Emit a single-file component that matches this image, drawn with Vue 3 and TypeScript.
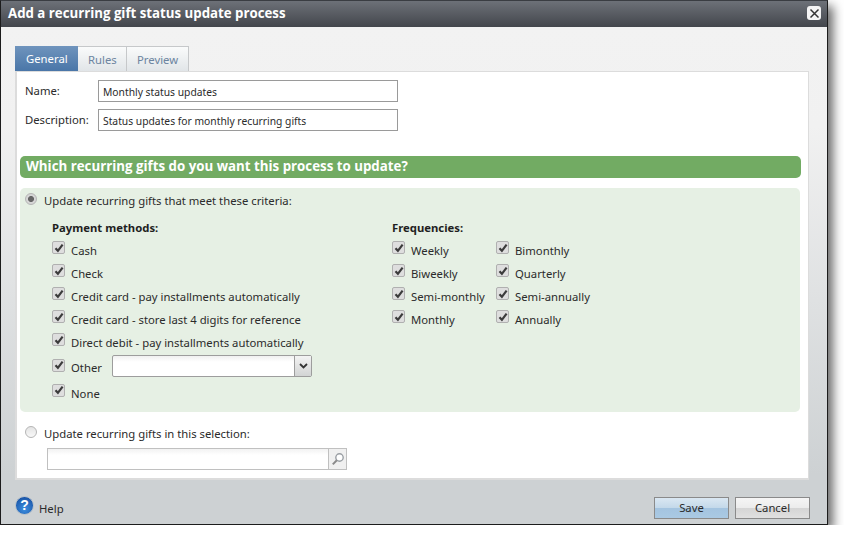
<script setup lang="ts">
const payments = [
  'Cash',
  'Check',
  'Credit card - pay installments automatically',
  'Credit card - store last 4 digits for reference',
  'Direct debit - pay installments automatically',
]
const freqA = ['Weekly', 'Biweekly', 'Semi-monthly', 'Monthly']
const freqB = ['Bimonthly', 'Quarterly', 'Semi-annually', 'Annually']
</script>

<template>
  <div class="dialog">
    <header class="titlebar">
      <span class="title">Add a recurring gift status update process</span>
      <span class="close">
        <svg width="11" height="11" viewBox="0 0 11 11"><path d="M1.5 1.5l8 8M9.5 1.5l-8 8" stroke="#333" stroke-width="1.5" fill="none" /></svg>
      </span>
    </header>
    <div class="body">
      <nav class="tabs">
        <span class="tab active">General</span>
        <span class="tab">Rules</span>
        <span class="tab">Preview</span>
      </nav>
      <main class="panel">
        <div class="field first">
          <label>Name:</label>
          <div class="input">Monthly status updates</div>
        </div>
        <div class="field second">
          <label>Description:</label>
          <div class="input">Status updates for monthly recurring gifts</div>
        </div>
        <h2 class="banner">Which recurring gifts do you want this process to update?</h2>
        <section class="criteria">
          <div class="radio-row">
            <span class="radio on"></span>
            <span>Update recurring gifts that meet these criteria:</span>
          </div>
          <div class="columns">
            <div class="pay">
              <h3>Payment methods:</h3>
              <div v-for="p in payments" :key="p" class="check-row">
                <span class="cb"><svg width="10" height="10" viewBox="0 0 10 10"><path d="M1.5 5.2l2.4 2.6L8.6 1.6" stroke="#3c3c3c" stroke-width="2.2" fill="none" /></svg></span>
                <span>{{ p }}</span>
              </div>
              <div class="check-row other">
                <span class="cb"><svg width="10" height="10" viewBox="0 0 10 10"><path d="M1.5 5.2l2.4 2.6L8.6 1.6" stroke="#3c3c3c" stroke-width="2.2" fill="none" /></svg></span>
                <span class="other-label">Other</span>
                <div class="combo">
                  <div class="combo-text"></div>
                  <span class="combo-btn"><svg width="9" height="6" viewBox="0 0 9 6"><path d="M1 1l3.5 3.5L8 1" stroke="#333" stroke-width="1.8" fill="none" /></svg></span>
                </div>
              </div>
              <div class="check-row none">
                <span class="cb"><svg width="10" height="10" viewBox="0 0 10 10"><path d="M1.5 5.2l2.4 2.6L8.6 1.6" stroke="#3c3c3c" stroke-width="2.2" fill="none" /></svg></span>
                <span>None</span>
              </div>
            </div>
            <div class="freq">
              <h3>Frequencies:</h3>
              <div class="freq-cols">
                <div class="freq-a">
                  <div v-for="f in freqA" :key="f" class="check-row">
                    <span class="cb"><svg width="10" height="10" viewBox="0 0 10 10"><path d="M1.5 5.2l2.4 2.6L8.6 1.6" stroke="#3c3c3c" stroke-width="2.2" fill="none" /></svg></span>
                    <span>{{ f }}</span>
                  </div>
                </div>
                <div>
                  <div v-for="f in freqB" :key="f" class="check-row">
                    <span class="cb"><svg width="10" height="10" viewBox="0 0 10 10"><path d="M1.5 5.2l2.4 2.6L8.6 1.6" stroke="#3c3c3c" stroke-width="2.2" fill="none" /></svg></span>
                    <span>{{ f }}</span>
                  </div>
                </div>
              </div>
            </div>
          </div>
        </section>
        <div class="radio-row second-radio">
          <span class="radio"></span>
          <span>Update recurring gifts in this selection:</span>
        </div>
        <div class="search">
          <div class="search-text"></div>
          <span class="search-btn">
            <svg width="14" height="14" viewBox="0 0 14 14"><circle cx="8.5" cy="5.5" r="3.7" stroke="#9a9fa4" stroke-width="1.4" fill="#fff" /><path d="M5.8 8.2L1.8 12.4" stroke="#8a8a8a" stroke-width="2" /></svg>
          </span>
        </div>
      </main>
      <footer class="footer">
        <span class="help-icon">?</span>
        <span class="help">Help</span>
        <span class="btn save">Save</span>
        <span class="btn cancel">Cancel</span>
      </footer>
    </div>
  </div>
</template>

<style>
html, body { background: #fff; margin: 0; }
</style>

<style scoped>
.dialog {
  box-sizing: border-box;
  width: 828px;
  height: 525px;
  border: 1px solid #1c1c1c;
  border-top-color: #3a3d42;
  box-shadow: 5px 6px 10px rgba(0, 0, 0, 0.6);
  font-family: "Noto Sans", "Open Sans", sans-serif;
  font-size: 11.3px;
  color: #2b2b2b;
  display: flex;
  flex-direction: column;
}
.titlebar {
  height: 26px;
  flex: none;
  background: linear-gradient(#6d7178, #43464c);
  display: flex;
  align-items: center;
  justify-content: space-between;
  padding: 0 6px 0 7px;
}
.title {
  color: #fff;
  font-family: "Open Sans", sans-serif;
  font-weight: 700;
  font-size: 13.25px;
  position: relative;
  top: -1px;
}
.close {
  width: 14px;
  height: 14px;
  background: #f4f4f4;
  border-radius: 3px;
  display: flex;
  align-items: center;
  justify-content: center;
  position: relative;
  top: -1px;
}
.body {
  flex: 1;
  min-height: 0;
  background: linear-gradient(#f2f2f2 0, #f1f1f1 20%, #cdd1d3 90%);
  padding: 19px 18px 0 14px;
  display: flex;
  flex-direction: column;
}
.tabs {
  display: flex;
  height: 25px;
  flex: none;
}
.tab {
  box-sizing: border-box;
  height: 25px;
  border: 1px solid #c6c8ca;
  border-left: 0;
  border-bottom: 0;
  background: linear-gradient(#fafbfb, #e1e5e8);
  color: #6c84a0;
  padding: 0 11px;
  display: flex;
  align-items: center;
}
.tab.active {
  background: linear-gradient(#6f94bd, #4a76a8);
  color: #fff;
  border: 0;
  padding: 0 11px 0 11px;
  width: 63px;
}
.tab:nth-child(2) { width: 49px; padding-left: 10px; }
.tab:nth-child(3) { width: 62px; padding-left: 10px; }
.panel {
  box-sizing: border-box;
  height: 409px;
  flex: none;
  background: #fff;
  border: 2px solid #dcdcdc;
  border-top-width: 1px;
  border-right-width: 1px;
  padding: 0 7px 0 3px;
  display: flex;
  flex-direction: column;
}
.field {
  display: flex;
  align-items: center;
  height: 22px;
  flex: none;
}
.field.first { margin-top: 8px; }
.field.second { margin-top: 7px; }
.field label { width: 73px; padding-left: 5px; position: relative; top: -1px; }
.input {
  box-sizing: border-box;
  width: 300px;
  height: 22px;
  border: 1px solid #9a9a9a;
  padding: 1px 0 0 4px;
  line-height: 20px;
  font-size: 10.3px;
  color: #2b2b2b;
  background: #fff;
}
.banner {
  margin: 25px 0 0 0;
  height: 22px;
  line-height: 20px;
  flex: none;
  background: #72ab63;
  border-radius: 5px;
  color: #fff;
  font-family: "Open Sans", sans-serif;
  font-size: 13.3px;
  font-weight: 700;
  padding-left: 6px;
}
.criteria {
  margin: 10px 1px 0 0;
  box-sizing: border-box;
  height: 224px;
  flex: none;
  background: #e6f0e4;
  border-radius: 5px;
  padding-top: 3px;
}
.radio-row {
  display: flex;
  align-items: center;
  height: 18px;
  padding-left: 5px;
}
.radio {
  box-sizing: border-box;
  width: 12px;
  height: 12px;
  border-radius: 50%;
  border: 1px solid #b5b5b5;
  background: linear-gradient(#e4e4e4, #f8f8f8);
  margin-right: 7px;
  flex: none;
  position: relative;
  top: -1px;
}
.radio.on {
  background: radial-gradient(circle, #666 0 2.6px, #d6d6d6 3.4px);
}
.columns {
  display: flex;
  margin-top: 9px;
  padding-left: 32px;
}
.pay { width: 340px; }
h3 {
  margin: 0;
  font-size: 11.3px;
  font-weight: 700;
  color: #1f1f1f;
  height: 21px;
  line-height: 19px;
}
.check-row {
  display: flex;
  align-items: center;
  height: 23px;
  white-space: nowrap;
}
.cb {
  box-sizing: border-box;
  width: 13px;
  height: 13px;
  border: 1px solid #b0b0b0;
  border-radius: 2px;
  background: #dedede;
  margin-right: 6px;
  flex: none;
  display: flex;
  align-items: center;
  justify-content: center;
  position: relative;
  top: -3px;
}
.check-row.other { height: 24px; margin-top: 1px; }
.check-row.other .cb { top: -2px; }
.check-row.none { height: 26px; margin-top: 1px; }
.other-label { width: 41px; }
.combo {
  display: flex;
  box-sizing: border-box;
  width: 200px;
  height: 22px;
  border: 1px solid #9d9d9d;
  border-radius: 2px;
  background: linear-gradient(#f0f0f0, #fff 30%);
  position: relative;
  top: -1px;
}
.combo-text { flex: 1; }
.combo-btn {
  width: 16px;
  border-left: 1px solid #9d9d9d;
  background: linear-gradient(#f3f3f3, #d2d4d4);
  display: flex;
  align-items: center;
  justify-content: center;
}
.freq-cols { display: flex; }
.freq-a { width: 104px; }
.second-radio { margin-top: 11px; height: 20px; }
.search {
  display: flex;
  box-sizing: border-box;
  width: 300px;
  height: 22px;
  margin: 5px 0 0 27px;
  border: 1px solid #c0c0c0;
  flex: none;
  background: linear-gradient(#f2f2f2, #fff 30%);
}
.search-text { flex: 1; }
.search-btn {
  width: 17px;
  border-left: 1px solid #c0c0c0;
  background: #f0f0f0;
  display: flex;
  align-items: center;
  justify-content: center;
}
.footer {
  flex: 1;
  display: flex;
  align-items: center;
  padding-top: 11px;
  margin-right: -1px;
}
.help-icon {
  width: 19px;
  height: 19px;
  margin-bottom: 4px;
  border-radius: 50%;
  background: radial-gradient(circle at 50% 70%, #3d8fe0, #12479a);
  border: 1px solid #b6c0ca;
  box-sizing: border-box;
  color: #fff;
  font-family: "Liberation Sans", sans-serif;
  font-weight: 700;
  font-size: 14px;
  line-height: 17px;
  text-align: center;
}
.help { margin-left: 5px; margin-top: 1px; }
.btn {
  box-sizing: border-box;
  width: 75px;
  height: 22px;
  border: 1px solid #8a8a8a;
  display: flex;
  align-items: center;
  justify-content: center;
}
.save {
  margin-left: auto;
  background: linear-gradient(#dae7f2 0, #c4d9ea 48%, #a4c4e0 52%, #aac9e3 100%);
}
.cancel {
  margin-left: 6px;
  background: linear-gradient(#f5f5f5 0, #ececec 48%, #d5d5d5 52%, #e0e0e0 100%);
}
</style>
